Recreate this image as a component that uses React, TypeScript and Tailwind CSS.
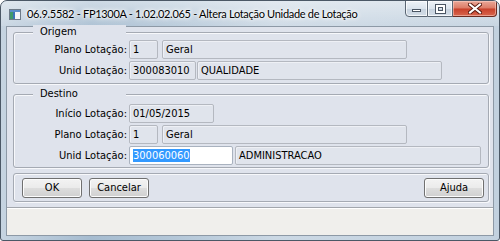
import * as React from "react";

const formFont = { fontFamily: '"DejaVu Sans Condensed", "Liberation Sans", sans-serif' };

const Field = ({
  w,
  text,
  focused,
  className = "",
}: {
  w: string;
  text: string;
  focused?: boolean;
  className?: string;
}) => (
  <div
    className={`${w} h-[19px] flex items-center px-[3px] rounded-[2px] border text-[11px] leading-[13px] whitespace-nowrap overflow-hidden ${
      focused
        ? "bg-white border-[#a9b2bf]"
        : "bg-[#e0e4ec] border-[#b4b8c0] shadow-[inset_1px_1px_0_#eef0f5]"
    } ${className}`}
  >
    {focused ? <span className="bg-[#3399ff] text-white">{text}</span> : <span className="text-black">{text}</span>}
  </div>
);

const Row = ({ label, children }: { label: string; children: React.ReactNode }) => (
  <div className="flex items-center h-[19px]">
    <div className="w-[113px] text-right text-[11px] leading-[13px] text-black">{label}</div>
    <div className="ml-[2px] flex items-center">{children}</div>
  </div>
);

const Group = ({
  title,
  className,
  children,
}: {
  title?: string;
  className: string;
  children: React.ReactNode;
}) => (
  <div
    className={`relative w-[476px] border border-[#a5aab3] rounded-[3px] shadow-[inset_1px_1px_0_#f7f8fb,1px_1px_0_#f7f8fb] ${className}`}
  >
    {title && (
      <span className="absolute left-[19px] top-[-8px] w-[93px] pl-[7px] bg-[#dfe3ec] text-[11px] leading-[13px] text-black">
        {title}
      </span>
    )}
    {children}
  </div>
);

const Button = ({ label, className = "" }: { label: string; className?: string }) => (
  <button
    className={`w-[60px] h-[20px] rounded-[3px] border border-[#707070] bg-[linear-gradient(to_bottom,#f3f3f3_0%,#ebebeb_48%,#dddddd_52%,#d0d0d0_100%)] shadow-[inset_0_0_0_1px_#fcfcfc] text-[11px] leading-[13px] text-black ${className}`}
  >
    {label}
  </button>
);

const App = () => {
  return (
    <div className="w-[500px] h-[241px] bg-white">
      <div className="w-[500px] h-[241px] flex flex-col rounded-t-[7px] rounded-b-[3px] border border-[#4b5866] bg-[linear-gradient(to_right,#c6d4e1_0%,#a6bcd0_18%,#b4c7d8_35%,#cbd8e4_55%,#c2d1df_100%)] overflow-hidden">
        {/* title bar */}
        <div className="h-[25px] flex items-start bg-[linear-gradient(to_bottom,rgba(255,255,255,0.45),rgba(255,255,255,0.1))]">
          <svg className="mt-[8px] ml-[8px]" width="12" height="11" viewBox="0 0 12 11">
            <rect x="0.5" y="0.5" width="11" height="10" fill="#f4f6f8" stroke="#6d7a88" />
            <rect x="1" y="1" width="10" height="2" fill="#5b8fc9" />
            <rect x="1" y="3" width="3" height="7" fill="#3f9a6a" />
            <rect x="4" y="3" width="2" height="7" fill="#3b74b8" />
          </svg>
          <div
            className="ml-[6px] mt-[5px] text-[11px] tracking-[-0.3px] leading-[16px] text-black whitespace-nowrap [text-shadow:0_0_6px_#fff,0_0_4px_#fff,0_0_2px_#fff]"
            style={{ fontFamily: 'Lato, "Noto Sans", sans-serif' }}
          >
            06.9.5582 - FP1300A - 1.02.02.065 - Altera Lotação Unidade de Lotação
          </div>
          <div className="flex-1" />
          <div className="flex h-[17px] mr-[2px] mt-[-1px]">
            <div className="w-[23px] h-full rounded-bl-[4px] border border-[#5a6673] bg-[linear-gradient(to_bottom,#eef3f8_0%,#dbe4ed_50%,#c6d2de_51%,#d3dde7_100%)] shadow-[inset_0_0_0_1px_rgba(255,255,255,0.7)] flex items-end justify-center pb-[4px]">
              <div className="w-[9px] h-[3px] bg-white border border-[#4a5563]" />
            </div>
            <div className="w-[25px] h-full border-y border-r border-[#5a6673] bg-[linear-gradient(to_bottom,#eef3f8_0%,#dbe4ed_50%,#c6d2de_51%,#d3dde7_100%)] shadow-[inset_0_0_0_1px_rgba(255,255,255,0.7)] flex items-center justify-center">
              <div className="w-[9px] h-[8px] border-[2px] border-white outline outline-1 outline-[#4a5563] shadow-[inset_0_0_0_1px_#4a5563]" />
            </div>
            <div className="w-[44px] h-full rounded-br-[4px] border-y border-r border-[#6b2a20] bg-[linear-gradient(to_bottom,#eaa898_0%,#dc7b66_48%,#c8402a_52%,#d8664e_100%)] shadow-[inset_0_0_0_1px_rgba(255,220,210,0.5)] flex items-center justify-center">
              <svg width="14" height="11" viewBox="0 0 14 11">
                <path d="M2 1.5 L12 9.5 M12 1.5 L2 9.5" stroke="#5a1a10" strokeWidth="4" strokeLinecap="square" />
                <path d="M2 1.5 L12 9.5 M12 1.5 L2 9.5" stroke="#ffffff" strokeWidth="2" strokeLinecap="square" />
              </svg>
            </div>
          </div>
        </div>

        {/* client area */}
        <div className="mx-[5px] h-[210px] border border-[#8d99a6] flex flex-col" style={formFont}>
          <div className="h-[180px] bg-[#dfe3ec] pl-[6px] pt-[5px] flex flex-col">
            <Group title="Origem" className="h-[52px] pt-[7px] flex flex-col gap-[2px]">
              <Row label="Plano Lotação:">
                <Field w="w-[29px]" text="1" />
                <Field w="w-[245px]" text="Geral" className="ml-[4px]" />
              </Row>
              <Row label="Unid Lotação:">
                <Field w="w-[67px]" text="300083010" />
                <Field w="w-[245px]" text="QUALIDADE" className="ml-[1px]" />
              </Row>
            </Group>

            <Group title="Destino" className="mt-[10px] h-[74px] pt-[9px] flex flex-col gap-[2px]">
              <Row label="Início Lotação:">
                <Field w="w-[85px]" text="01/05/2015" />
              </Row>
              <Row label="Plano Lotação:">
                <Field w="w-[29px]" text="1" />
                <Field w="w-[245px]" text="Geral" className="ml-[4px]" />
              </Row>
              <Row label="Unid Lotação:">
                <Field w="w-[104px]" text="300060060" focused />
                <Field w="w-[246px]" text="ADMINISTRACAO" className="ml-[2px]" />
              </Row>
            </Group>

            <Group className="mt-[5px] h-[29px] flex items-center pl-[8px] pr-[4px]">
              <Button label="OK" />
              <Button label="Cancelar" className="ml-[7px]" />
              <div className="flex-1" />
              <Button label="Ajuda" />
            </Group>
          </div>
          <div className="h-px bg-[#a2a6ac]" />
          <div className="h-px bg-white" />
          <div className="flex-1 bg-[#f0efec]" />
        </div>
      </div>
    </div>
  );
};

export default App;
